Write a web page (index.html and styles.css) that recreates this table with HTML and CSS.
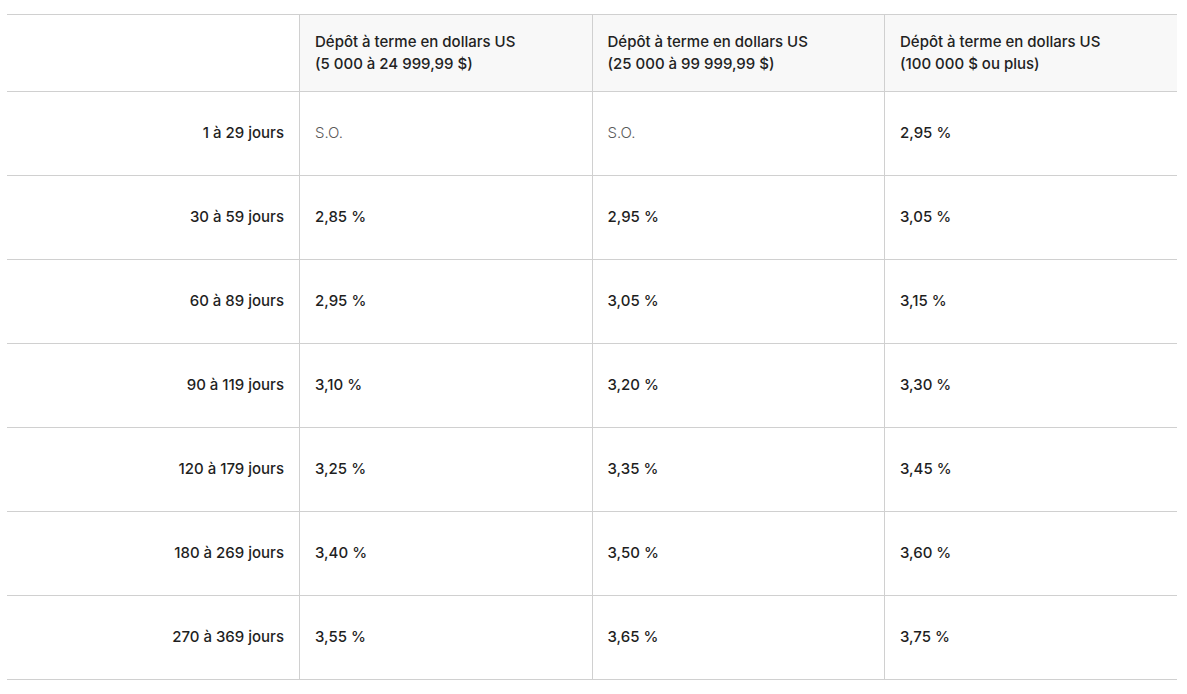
FILE: index.html
```html
<!DOCTYPE html>
<html lang="fr">
<head>
<meta charset="utf-8">
<link rel="stylesheet" href="styles.css">
</head>
<body>
<table class="rates">
  <thead>
    <tr>
      <th class="corner"></th>
      <th>Dépôt à terme en dollars US<br>(5 000 à 24 999,99 $)</th>
      <th>Dépôt à terme en dollars US<br>(25 000 à 99 999,99 $)</th>
      <th>Dépôt à terme en dollars US<br>(100 000 $ ou plus)</th>
    </tr>
  </thead>
  <tbody>
    <tr><th class="term">1 à 29 jours</th><td class="na">S.O.</td><td class="na">S.O.</td><td>2,95 %</td></tr>
    <tr><th class="term">30 à 59 jours</th><td>2,85 %</td><td>2,95 %</td><td>3,05 %</td></tr>
    <tr><th class="term">60 à 89 jours</th><td>2,95 %</td><td>3,05 %</td><td>3,15 %</td></tr>
    <tr><th class="term">90 à 119 jours</th><td>3,10 %</td><td>3,20 %</td><td>3,30 %</td></tr>
    <tr><th class="term">120 à 179 jours</th><td>3,25 %</td><td>3,35 %</td><td>3,45 %</td></tr>
    <tr><th class="term">180 à 269 jours</th><td>3,40 %</td><td>3,50 %</td><td>3,60 %</td></tr>
    <tr><th class="term">270 à 369 jours</th><td>3,55 %</td><td>3,65 %</td><td>3,75 %</td></tr>
  </tbody>
</table>
</body>
</html>
```
FILE: styles.css
```css
html, body {
  margin: 0;
  padding: 0;
  background: #ffffff;
}
body {
  padding: 14px 0 0 7px;
  font-family: Inter, "Liberation Sans", sans-serif;
  font-size: 15px;
  color: #1f1f1f;
}
.rates {
  width: 1170px;
  border-collapse: collapse;
  table-layout: fixed;
}
.rates th,
.rates td {
  border: 1px solid #d0d0d0;
  padding: 0 15px;
  text-align: left;
  vertical-align: middle;
  line-height: 22px;
}
.rates tr > :first-child { border-left: none; }
.rates tr > :last-child { border-right: none; }
.rates thead th {
  height: 76px;
  background: #f8f8f8;
  font-weight: 500;
  color: #222;
}
.rates thead th.corner { background: #ffffff; }
.rates tbody th,
.rates tbody td {
  height: 81px;
  padding-bottom: 2px;
  font-weight: 500;
}
.rates .term {
  text-align: right;
  padding-right: 15px;
}
.rates .na {
  font-weight: 300;
  color: #5a5a5a;
}
```
